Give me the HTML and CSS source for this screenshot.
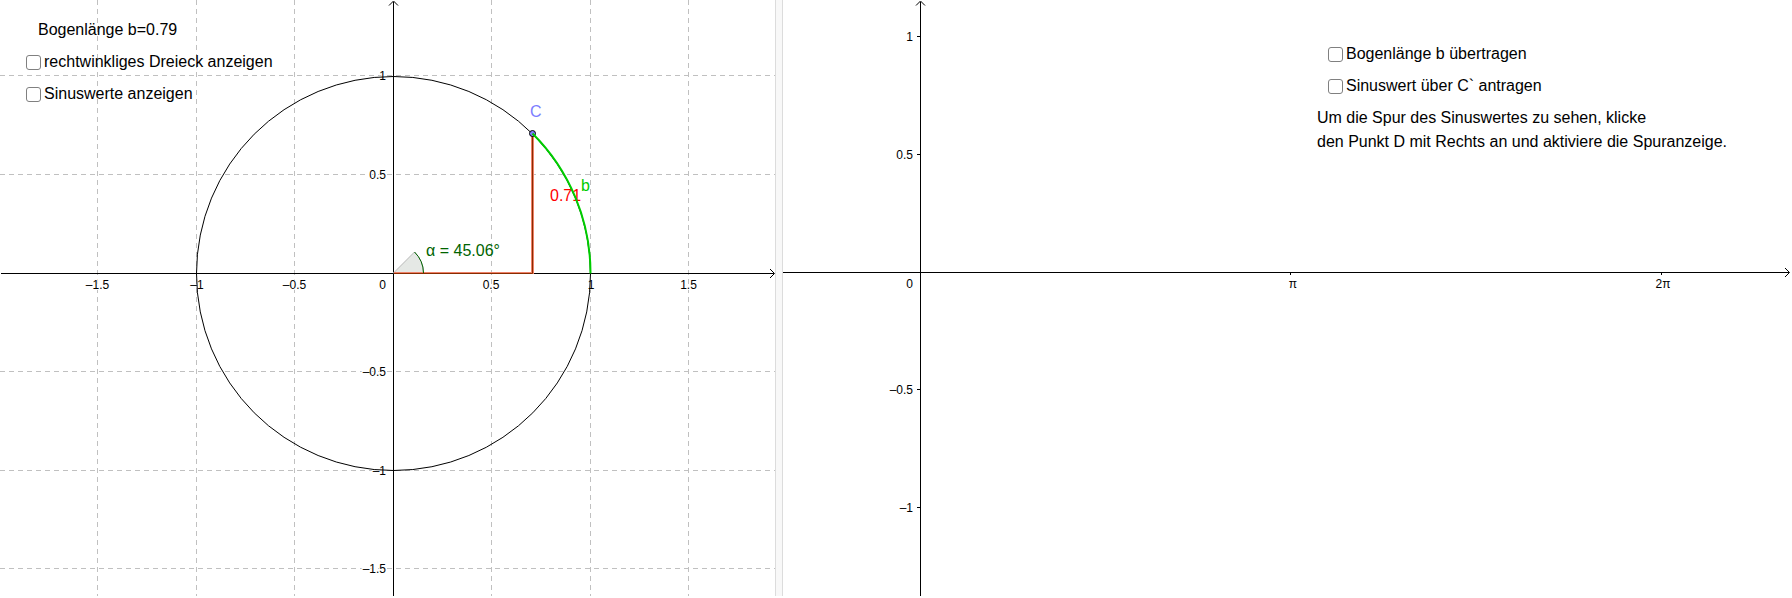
FILE: index.html
```html
<!DOCTYPE html>
<html lang="de">
<head>
<meta charset="utf-8">
<title>Sinus am Einheitskreis</title>
<link rel="stylesheet" href="styles.css">
</head>
<body>
<main class="applet">
  <section class="view" aria-label="Einheitskreis">
    <svg class="graph" viewBox="0 0 775 596">
      <g class="grid">
        <path d="M97.5 0V596M196.5 0V596M294.5 0V596M491.5 0V596M590.5 0V596M688.5 0V596"/>
        <path d="M0 75.5H775M0 174.5H775M0 371.5H775M0 470.5H775M0 568.5H775"/>
      </g>
      <g class="axis">
        <path d="M1 273.5H774M393.5 596V2"/>
        <path class="arrow" d="M770 269L774.5 273.5L770 278M389 5.5L393.5 1L398 5.5"/>
      </g>
      <g class="halo middle">
        <text x="97.5" y="289">–1.5</text>
        <text x="197" y="289">–1</text>
        <text x="294.5" y="289">–0.5</text>
        <text x="491" y="289">0.5</text>
        <text x="591" y="289">1</text>
        <text x="688.5" y="289">1.5</text>
      </g>
      <g class="halo end">
        <text x="386" y="289">0</text>
        <text x="386" y="80">1</text>
        <text x="386" y="179">0.5</text>
        <text x="386" y="376">–0.5</text>
        <text x="386" y="475">–1</text>
        <text x="386" y="573">–1.5</text>
      </g>
      <circle class="circle" cx="393.5" cy="273.5" r="197"/>
      <path class="angle" d="M393.5 273L414.5 252A30 30 0 0 1 423.5 273Z"/>
      <path class="triangle" d="M394 273H532.5"/>
      <path class="triangle height" d="M532.5 274V133.5"/>
      <path class="triangle-core" d="M394 273.5H532.5V133.5"/>
      <path class="angle-arc" d="M414.5 252A30 30 0 0 1 423.5 273"/>
      <circle class="point" cx="532.5" cy="133.5" r="3"/>
      <text class="name red" x="550" y="201">0.71</text>
      <path class="arc" d="M532.5 133.5A197 197 0 0 1 590.5 273.5"/>
      <text class="name blue" x="530" y="117">C</text>
      <text class="name lime" x="581" y="191">b</text>
      <text class="name green" x="426" y="256">α = 45.06°</text>
    </svg>
    <div class="panel panel-left">
      <p class="caption">Bogenlänge b=0.79</p>
      <label class="option"><input type="checkbox">rechtwinkliges Dreieck anzeigen</label>
      <label class="option"><input type="checkbox">Sinuswerte anzeigen</label>
    </div>
  </section>
  <div class="divider"></div>
  <section class="view" aria-label="Sinuskurve">
    <svg class="graph" viewBox="0 0 1009 596">
      <g class="axis">
        <path d="M0 272.5H1006M137.5 596V2"/>
        <path d="M507.5 272V275M878.5 272V275M134 36.5H137M134 154.5H137M134 389.5H137M134 507.5H137"/>
        <path class="arrow" d="M1002 268L1006.5 272.5L1002 277M133 5.5L137.5 1L142 5.5"/>
      </g>
      <g class="ticks middle">
        <text x="510" y="288">π</text>
        <text x="880" y="288">2π</text>
      </g>
      <g class="ticks end">
        <text x="130" y="288">0</text>
        <text x="130" y="41">1</text>
        <text x="130" y="159">0.5</text>
        <text x="130" y="394">–0.5</text>
        <text x="130" y="512">–1</text>
      </g>
    </svg>
    <div class="panel panel-right">
      <label class="option"><input type="checkbox">Bogenlänge b übertragen</label>
      <label class="option"><input type="checkbox">Sinuswert über C` antragen</label>
      <p class="note">Um die Spur des Sinuswertes zu sehen, klicke<br>den Punkt D mit Rechts an und aktiviere die Spuranzeige.</p>
    </div>
  </section>
</main>
</body>
</html>
```
FILE: styles.css
```css
body {
  margin: 0;
  background: #fff;
  color: #000;
  font: 16px/24px "Liberation Sans", Arial, sans-serif;
}

.applet {
  display: grid;
  grid-template-columns: 775fr 8px 1009fr;
}

.view {
  position: relative;
  min-width: 0;
}

.graph {
  display: block;
  width: 100%;
  height: auto;
}

.divider {
  box-sizing: border-box;
  background: #f8f8f8;
  border: solid #dcdcdc;
  border-width: 0 1px;
}

.grid {
  fill: none;
  stroke: #c0c0c0;
  stroke-dasharray: 5 4;
}

.axis {
  fill: none;
  stroke: #000;
}

.middle {
  text-anchor: middle;
}

.end {
  text-anchor: end;
}

.halo,
.ticks {
  font-size: 12px;
}

.halo {
  paint-order: stroke;
  stroke: #fff;
  stroke-width: 2px;
}

.circle {
  fill: none;
  stroke: #000;
}

.triangle,
.triangle-core {
  fill: none;
}

.triangle {
  stroke: #ee8068;
  stroke-width: 2px;
}

.height {
  stroke-width: 3px;
}

.triangle-core {
  stroke: #8a2c00;
}

.angle {
  fill: #e5e8e5;
  stroke: #b8b8b8;
}

.angle-arc {
  fill: none;
  stroke: #006400;
}

.arc {
  fill: none;
  stroke: #00cc00;
  stroke-width: 2px;
}

.point {
  fill: #7d7dff;
  stroke: #000;
}

.name {
  font-size: 16px;
}

.red {
  fill: #f00;
}

.blue {
  fill: #7d7dff;
}

.lime {
  fill: #00cc00;
}

.green {
  fill: #006400;
}

.panel {
  position: absolute;
  display: flex;
  flex-direction: column;
  gap: 8px;
  white-space: nowrap;
}

.panel-left {
  top: 18px;
  left: 26px;
}

.panel-right {
  top: 42px;
  right: 65px;
}

.caption,
.note {
  margin: 0;
}

.caption {
  padding-left: 12px;
}

.panel-right .option {
  padding-left: 11px;
}

.option {
  display: flex;
  align-items: center;
  gap: 3px;
}

.option input {
  appearance: none;
  box-sizing: border-box;
  width: 15px;
  height: 15px;
  margin: 0;
  background: #fff;
  border: 1px solid #808080;
  border-radius: 3px;
}

.option input:checked {
  background: #6557d2;
}
```
